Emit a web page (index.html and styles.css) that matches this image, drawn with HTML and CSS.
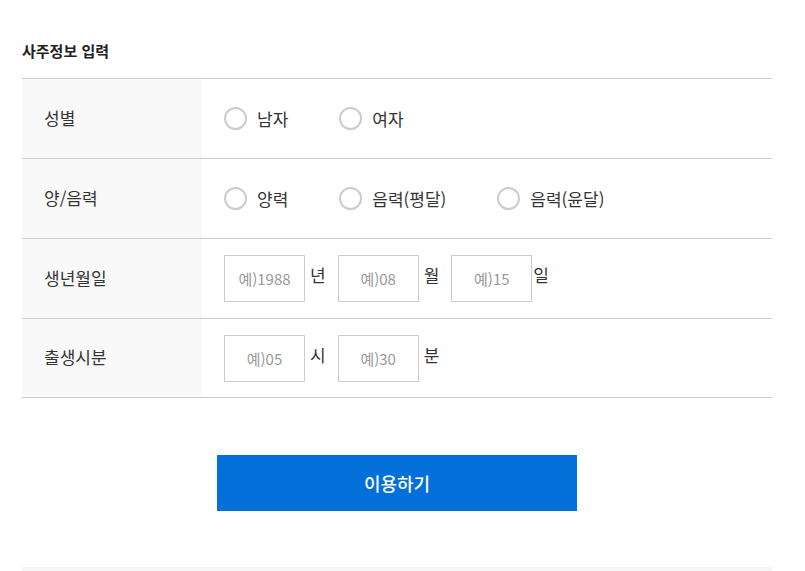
FILE: index.html
```html
<!DOCTYPE html>
<html lang="ko">
<head>
<meta charset="utf-8">
<link rel="stylesheet" href="styles.css">
</head>
<body>
<div class="wrap">
  <h2 class="title">사주정보 입력</h2>
  <div class="table">
    <div class="row">
      <div class="label">성별</div>
      <div class="field">
        <label class="radio"><span class="dot"></span>남자</label>
        <label class="radio"><span class="dot"></span>여자</label>
      </div>
    </div>
    <div class="row">
      <div class="label">양/음력</div>
      <div class="field">
        <label class="radio"><span class="dot"></span>양력</label>
        <label class="radio"><span class="dot"></span>음력(평달)</label>
        <label class="radio"><span class="dot"></span>음력(윤달)</label>
      </div>
    </div>
    <div class="row">
      <div class="label">생년월일</div>
      <div class="field">
        <input class="box" type="text" placeholder="예)1988"><span class="unit">년</span>
        <input class="box" type="text" placeholder="예)08"><span class="unit">월</span>
        <input class="box" type="text" placeholder="예)15"><span class="unit unit-tight">일</span>
      </div>
    </div>
    <div class="row">
      <div class="label">출생시분</div>
      <div class="field">
        <input class="box" type="text" placeholder="예)05"><span class="unit">시</span>
        <input class="box" type="text" placeholder="예)30"><span class="unit">분</span>
      </div>
    </div>
  </div>
  <div class="actions">
    <button class="submit" type="button">이용하기</button>
  </div>
  <div class="footer-bar"></div>
</div>
</body>
</html>
```

FILE: styles.css
```css
* { box-sizing: border-box; }
html, body { margin: 0; padding: 0; background: #fff; }
body {
  font-family: "Noto Sans CJK KR", "Noto Sans", sans-serif;
  color: #333;
}
.wrap {
  width: 750px;
  margin-left: 22px;
  padding-top: 38px;
}
.title {
  margin: 0;
  font-size: 15px;
  font-weight: 700;
  color: #222;
  line-height: 26px;
  height: 40px;
}
.table {
  border-top: 1px solid #ccc;
}
.row {
  display: flex;
  height: 80px;
  border-bottom: 1px solid #ccc;
}
.row:last-child { height: 79px; }
.label {
  width: 180px;
  background: #f9f9f9;
  padding-left: 22px;
  padding-bottom: 3px;
  display: flex;
  align-items: center;
  font-size: 17px;
  color: #333;
}
.field {
  display: flex;
  align-items: center;
  padding-left: 22px;
  font-size: 17px;
  color: #333;
}
.radio {
  display: flex;
  align-items: center;
  margin-right: 51px;
}
.dot {
  width: 23px;
  height: 23px;
  border: 2px solid #ccc;
  border-radius: 50%;
  background: #fff;
  margin-right: 10px;
}
.box {
  width: 81px;
  height: 47px;
  border: 1px solid #ccc;
  background: #fff;
  font-family: "Noto Sans CJK KR", "Noto Sans", sans-serif;
  font-size: 15px;
  text-align: center;
  padding: 0;
  margin: 0;
  outline: none;
}
.box::placeholder { color: #999; }
.unit {
  margin: 0 12px 8px 5px;
  font-size: 17px;
  color: #333;
}
.unit-tight { margin-left: 1px; }
.actions {
  display: flex;
  justify-content: center;
  padding-top: 57px;
}
.submit {
  width: 360px;
  height: 56px;
  border: 0;
  background: #0270d8;
  color: #fff;
  font-family: "Noto Sans CJK KR", "Noto Sans", sans-serif;
  font-size: 18px;
  font-weight: 500;
}
.footer-bar {
  margin-top: 56px;
  height: 10px;
  background: #f6f6f6;
}
```
